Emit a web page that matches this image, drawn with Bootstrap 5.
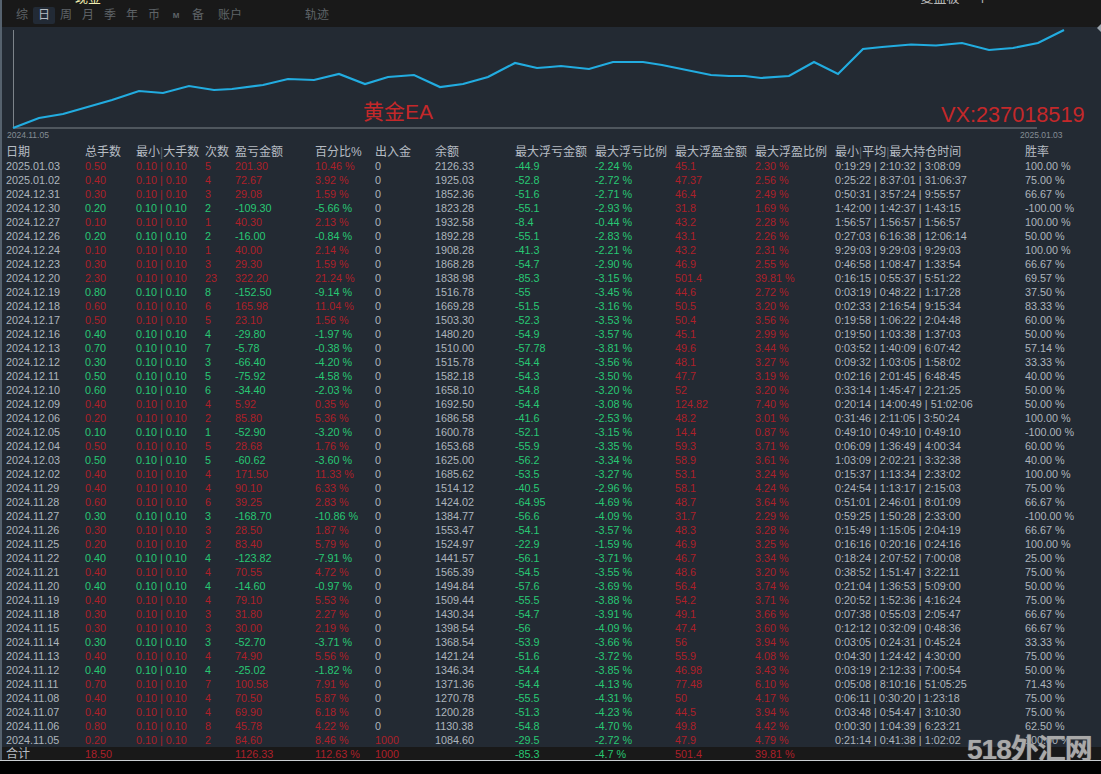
<!DOCTYPE html>
<html lang="zh">
<head>
<meta charset="utf-8">
<title>黄金EA</title>
<link href="https://cdn.jsdelivr.net/npm/bootstrap@5.3.0/dist/css/bootstrap.min.css" rel="stylesheet">
<style>
html,body{height:100%;overflow:hidden;background:#000}
body{font-family:"Liberation Sans","Noto Sans CJK SC",sans-serif}
.shell{height:760px;border-left:2px solid #56626e;display:flex;flex-direction:column;background:#232a33;position:relative;overflow:hidden}
.base-line{height:1px;background:#c9cdd1}
.topbar{height:27px;background:#191919;flex:none;overflow:hidden;position:relative}
.cut-row{height:4px;overflow:hidden;font-size:13px;line-height:4px;padding-left:73px;padding-right:112px}
.cut-row span{display:block;margin-top:-8px;line-height:12px}
.cut-y{color:#f2eeb0}
.cut-w{color:#b9b9b9}
.tabs{padding-left:9px;height:23px;font-size:12px;color:#5f6468}
.tab{width:22px;height:17px;line-height:17px;text-align:center;border-radius:2px}
.tab-on{background:#222a35;color:#b5bcc3}
.tab-m{font-size:8px;font-weight:700}
.tab-a{width:auto;margin-left:9px}
.tab-b{width:auto;margin-left:63px}
.chart-wrap{height:118px;flex:none}
.chart-wrap svg{display:block}
.axis-t{font-size:8.5px;fill:#858d95}
.mark-a{font-size:21px;fill:#c4282a}
.mark-b{font-size:21.7px;fill:#c4282a}
.table.sheet{--bs-table-bg:transparent;--bs-table-color:#adb5bd;table-layout:fixed;width:1099px;margin:0;font-size:10.8px;color:#adb5bd}
.table.sheet>:not(caption)>*>*{padding:0;height:14px;line-height:14px;white-space:nowrap;overflow:visible;background:transparent;color:inherit;border:0;box-shadow:none}
.table.sheet th{font-weight:400;font-size:12px;color:#b6bcc3}
.table.sheet>:not(caption)>*>*:first-child{padding-left:4px}
.sheet th i{font-style:normal;color:#59626c}
tr.lossy{color:#28c873}
tr.gain{color:#ad2029}
.table.sheet>tbody>tr>td:nth-child(1),.table.sheet>tbody>tr>td:nth-child(7),.table.sheet>tbody>tr>td:nth-child(8),.table.sheet>tbody>tr>td:nth-child(13),.table.sheet>tbody>tr>td:nth-child(14){color:#adb5bd}
.table.sheet>tbody>tr>td:nth-child(9),.table.sheet>tbody>tr>td:nth-child(10){color:#28c873}
.table.sheet>tbody>tr>td:nth-child(11),.table.sheet>tbody>tr>td:nth-child(12){color:#ad2029}
.table.sheet>tfoot>tr>td{background:#191919;color:#ad2029}
.table.sheet>tfoot>tr>td:first-child{color:#b6bcc3;font-size:12px}
.table.sheet>tfoot>tr>td:nth-child(9),.table.sheet>tfoot>tr>td:nth-child(10){color:#28c873}
.table.sheet>tbody>tr>td.in-red{color:#ad2029}
.stamp{position:absolute;left:965px;top:735px;font-size:28px;font-weight:700;line-height:30px;color:#a9a9a9;letter-spacing:-1px;white-space:nowrap;text-shadow:0 0 1px #777}
.edge-tip{position:absolute;right:0;top:24px;width:0;height:0;border:4px solid transparent;border-right-color:#9aa3ab;border-left:0}
</style>
</head>
<body>
<div class="shell">
<div class="topbar">
<div class="cut-row d-flex justify-content-between"><span class="cut-y">现金</span><span class="cut-w">复盘板 一个</span></div>
<div class="tabs d-flex align-items-center">
<div class="tab">综</div><div class="tab tab-on">日</div><div class="tab">周</div><div class="tab">月</div><div class="tab">季</div><div class="tab">年</div><div class="tab">币</div><div class="tab tab-m">M</div><div class="tab">备</div><div class="tab tab-a">账户</div><div class="tab tab-b">轨迹</div>
</div>
</div>
<div class="edge-tip"></div>
<div class="chart-wrap">
<svg width="1099" height="118" viewBox="2 27 1099 118">
<path d="M13.5 30V128H1037" fill="none" stroke="#7c838a" stroke-width="1"/>
<polyline fill="none" stroke="#22ace0" stroke-width="2.2" points="13,128 39,118 63,114 112,100 139,91 163,93 189,86 214,90 232,89 263,85 288,79 314,80 339,74 365,84 388,77 414,75 440,87 463,84 488,77 515,63 537,68 550,67 561,66 589,69 613,62 643,62 662,65 711,75 729,76 745,76 761,78 789,76 814,62 838,74 863,49 882,47 911,44.5 936,45.5 962,43 989,50 1013,48 1038,43 1064,30"/>
<text class="axis-t" x="7" y="138">2024.11.05</text>
<text class="axis-t" x="1020" y="138">2025.01.03</text>
<text class="mark-a" x="363" y="119">黄金EA</text>
<text class="mark-b" x="941" y="122">VX:237018519</text>
</svg>
</div>
<table class="table table-borderless sheet">
<colgroup><col style="width:83px"><col style="width:51px"><col style="width:69px"><col style="width:30px"><col style="width:80px"><col style="width:60px"><col style="width:60px"><col style="width:80px"><col style="width:80px"><col style="width:80px"><col style="width:80px"><col style="width:80px"><col style="width:190px"><col style="width:76px"></colgroup>
<thead><tr><th>日期</th><th>总手数</th><th>最小<i>|</i>大手数</th><th>次数</th><th>盈亏金额</th><th>百分比%</th><th>出入金</th><th>余额</th><th>最大浮亏金额</th><th>最大浮亏比例</th><th>最大浮盈金额</th><th>最大浮盈比例</th><th>最小<i>|</i>平均<i>|</i>最大持仓时间</th><th>胜率</th></tr></thead>
<tbody>
<tr class="gain"><td>2025.01.03</td><td>0.50</td><td>0.10 | 0.10</td><td>5</td><td>201.30</td><td>10.46 %</td><td>0</td><td>2126.33</td><td>-44.9</td><td>-2.24 %</td><td>45.1</td><td>2.30 %</td><td>0:19:29 | 2:10:32 | 3:08:09</td><td>100.00 %</td></tr>
<tr class="gain"><td>2025.01.02</td><td>0.40</td><td>0.10 | 0.10</td><td>4</td><td>72.67</td><td>3.92 %</td><td>0</td><td>1925.03</td><td>-52.8</td><td>-2.72 %</td><td>47.37</td><td>2.56 %</td><td>0:25:22 | 8:37:01 | 31:06:37</td><td>75.00 %</td></tr>
<tr class="gain"><td>2024.12.31</td><td>0.30</td><td>0.10 | 0.10</td><td>3</td><td>29.08</td><td>1.59 %</td><td>0</td><td>1852.36</td><td>-51.6</td><td>-2.71 %</td><td>46.4</td><td>2.49 %</td><td>0:50:31 | 3:57:24 | 9:55:57</td><td>66.67 %</td></tr>
<tr class="lossy"><td>2024.12.30</td><td>0.20</td><td>0.10 | 0.10</td><td>2</td><td>-109.30</td><td>-5.66 %</td><td>0</td><td>1823.28</td><td>-55.1</td><td>-2.93 %</td><td>31.8</td><td>1.69 %</td><td>1:42:00 | 1:42:37 | 1:43:15</td><td>-100.00 %</td></tr>
<tr class="gain"><td>2024.12.27</td><td>0.10</td><td>0.10 | 0.10</td><td>1</td><td>40.30</td><td>2.13 %</td><td>0</td><td>1932.58</td><td>-8.4</td><td>-0.44 %</td><td>43.2</td><td>2.28 %</td><td>1:56:57 | 1:56:57 | 1:56:57</td><td>100.00 %</td></tr>
<tr class="lossy"><td>2024.12.26</td><td>0.20</td><td>0.10 | 0.10</td><td>2</td><td>-16.00</td><td>-0.84 %</td><td>0</td><td>1892.28</td><td>-55.1</td><td>-2.83 %</td><td>43.1</td><td>2.26 %</td><td>0:27:03 | 6:16:38 | 12:06:14</td><td>50.00 %</td></tr>
<tr class="gain"><td>2024.12.24</td><td>0.10</td><td>0.10 | 0.10</td><td>1</td><td>40.00</td><td>2.14 %</td><td>0</td><td>1908.28</td><td>-41.3</td><td>-2.21 %</td><td>43.2</td><td>2.31 %</td><td>9:29:03 | 9:29:03 | 9:29:03</td><td>100.00 %</td></tr>
<tr class="gain"><td>2024.12.23</td><td>0.30</td><td>0.10 | 0.10</td><td>3</td><td>29.30</td><td>1.59 %</td><td>0</td><td>1868.28</td><td>-54.7</td><td>-2.90 %</td><td>46.9</td><td>2.55 %</td><td>0:46:58 | 1:08:47 | 1:33:54</td><td>66.67 %</td></tr>
<tr class="gain"><td>2024.12.20</td><td>2.30</td><td>0.10 | 0.10</td><td>23</td><td>322.20</td><td>21.24 %</td><td>0</td><td>1838.98</td><td>-85.3</td><td>-3.15 %</td><td>501.4</td><td>39.81 %</td><td>0:16:15 | 0:55:37 | 5:51:22</td><td>69.57 %</td></tr>
<tr class="lossy"><td>2024.12.19</td><td>0.80</td><td>0.10 | 0.10</td><td>8</td><td>-152.50</td><td>-9.14 %</td><td>0</td><td>1516.78</td><td>-55</td><td>-3.45 %</td><td>44.6</td><td>2.72 %</td><td>0:03:19 | 0:48:22 | 1:17:28</td><td>37.50 %</td></tr>
<tr class="gain"><td>2024.12.18</td><td>0.60</td><td>0.10 | 0.10</td><td>6</td><td>165.98</td><td>11.04 %</td><td>0</td><td>1669.28</td><td>-51.5</td><td>-3.16 %</td><td>50.5</td><td>3.20 %</td><td>0:02:33 | 2:16:54 | 9:15:34</td><td>83.33 %</td></tr>
<tr class="gain"><td>2024.12.17</td><td>0.50</td><td>0.10 | 0.10</td><td>5</td><td>23.10</td><td>1.56 %</td><td>0</td><td>1503.30</td><td>-52.3</td><td>-3.53 %</td><td>50.4</td><td>3.56 %</td><td>0:19:58 | 1:06:22 | 2:04:48</td><td>60.00 %</td></tr>
<tr class="lossy"><td>2024.12.16</td><td>0.40</td><td>0.10 | 0.10</td><td>4</td><td>-29.80</td><td>-1.97 %</td><td>0</td><td>1480.20</td><td>-54.9</td><td>-3.57 %</td><td>45.1</td><td>2.99 %</td><td>0:19:50 | 1:03:38 | 1:37:03</td><td>50.00 %</td></tr>
<tr class="lossy"><td>2024.12.13</td><td>0.70</td><td>0.10 | 0.10</td><td>7</td><td>-5.78</td><td>-0.38 %</td><td>0</td><td>1510.00</td><td>-57.78</td><td>-3.81 %</td><td>49.6</td><td>3.44 %</td><td>0:03:52 | 1:40:09 | 6:07:42</td><td>57.14 %</td></tr>
<tr class="lossy"><td>2024.12.12</td><td>0.30</td><td>0.10 | 0.10</td><td>3</td><td>-66.40</td><td>-4.20 %</td><td>0</td><td>1515.78</td><td>-54.4</td><td>-3.56 %</td><td>48.1</td><td>3.27 %</td><td>0:09:32 | 1:03:05 | 1:58:02</td><td>33.33 %</td></tr>
<tr class="lossy"><td>2024.12.11</td><td>0.50</td><td>0.10 | 0.10</td><td>5</td><td>-75.92</td><td>-4.58 %</td><td>0</td><td>1582.18</td><td>-54.3</td><td>-3.50 %</td><td>47.7</td><td>3.19 %</td><td>0:02:16 | 2:01:45 | 6:48:45</td><td>40.00 %</td></tr>
<tr class="lossy"><td>2024.12.10</td><td>0.60</td><td>0.10 | 0.10</td><td>6</td><td>-34.40</td><td>-2.03 %</td><td>0</td><td>1658.10</td><td>-54.8</td><td>-3.20 %</td><td>52</td><td>3.20 %</td><td>0:33:14 | 1:45:47 | 2:21:25</td><td>50.00 %</td></tr>
<tr class="gain"><td>2024.12.09</td><td>0.40</td><td>0.10 | 0.10</td><td>4</td><td>5.92</td><td>0.35 %</td><td>0</td><td>1692.50</td><td>-54.4</td><td>-3.08 %</td><td>124.82</td><td>7.40 %</td><td>0:20:14 | 14:00:49 | 51:02:06</td><td>50.00 %</td></tr>
<tr class="gain"><td>2024.12.06</td><td>0.20</td><td>0.10 | 0.10</td><td>2</td><td>85.80</td><td>5.36 %</td><td>0</td><td>1686.58</td><td>-41.6</td><td>-2.53 %</td><td>48.2</td><td>3.01 %</td><td>0:31:46 | 2:11:05 | 3:50:24</td><td>100.00 %</td></tr>
<tr class="lossy"><td>2024.12.05</td><td>0.10</td><td>0.10 | 0.10</td><td>1</td><td>-52.90</td><td>-3.20 %</td><td>0</td><td>1600.78</td><td>-52.1</td><td>-3.15 %</td><td>14.4</td><td>0.87 %</td><td>0:49:10 | 0:49:10 | 0:49:10</td><td>-100.00 %</td></tr>
<tr class="gain"><td>2024.12.04</td><td>0.50</td><td>0.10 | 0.10</td><td>5</td><td>28.68</td><td>1.76 %</td><td>0</td><td>1653.68</td><td>-55.9</td><td>-3.35 %</td><td>59.3</td><td>3.71 %</td><td>0:06:09 | 1:36:49 | 4:00:34</td><td>60.00 %</td></tr>
<tr class="lossy"><td>2024.12.03</td><td>0.50</td><td>0.10 | 0.10</td><td>5</td><td>-60.62</td><td>-3.60 %</td><td>0</td><td>1625.00</td><td>-56.2</td><td>-3.34 %</td><td>58.9</td><td>3.61 %</td><td>1:03:09 | 2:02:21 | 3:32:38</td><td>40.00 %</td></tr>
<tr class="gain"><td>2024.12.02</td><td>0.40</td><td>0.10 | 0.10</td><td>4</td><td>171.50</td><td>11.33 %</td><td>0</td><td>1685.62</td><td>-53.5</td><td>-3.27 %</td><td>53.1</td><td>3.24 %</td><td>0:15:37 | 1:13:34 | 2:33:02</td><td>100.00 %</td></tr>
<tr class="gain"><td>2024.11.29</td><td>0.40</td><td>0.10 | 0.10</td><td>4</td><td>90.10</td><td>6.33 %</td><td>0</td><td>1514.12</td><td>-40.5</td><td>-2.96 %</td><td>58.1</td><td>4.24 %</td><td>0:24:54 | 1:13:17 | 2:15:03</td><td>75.00 %</td></tr>
<tr class="gain"><td>2024.11.28</td><td>0.60</td><td>0.10 | 0.10</td><td>6</td><td>39.25</td><td>2.83 %</td><td>0</td><td>1424.02</td><td>-64.95</td><td>-4.69 %</td><td>48.7</td><td>3.64 %</td><td>0:51:01 | 2:46:01 | 8:01:09</td><td>66.67 %</td></tr>
<tr class="lossy"><td>2024.11.27</td><td>0.30</td><td>0.10 | 0.10</td><td>3</td><td>-168.70</td><td>-10.86 %</td><td>0</td><td>1384.77</td><td>-56.6</td><td>-4.09 %</td><td>31.7</td><td>2.29 %</td><td>0:59:25 | 1:50:28 | 2:33:00</td><td>-100.00 %</td></tr>
<tr class="gain"><td>2024.11.26</td><td>0.30</td><td>0.10 | 0.10</td><td>3</td><td>28.50</td><td>1.87 %</td><td>0</td><td>1553.47</td><td>-54.1</td><td>-3.57 %</td><td>48.3</td><td>3.28 %</td><td>0:15:49 | 1:15:05 | 2:04:19</td><td>66.67 %</td></tr>
<tr class="gain"><td>2024.11.25</td><td>0.20</td><td>0.10 | 0.10</td><td>2</td><td>83.40</td><td>5.79 %</td><td>0</td><td>1524.97</td><td>-22.9</td><td>-1.59 %</td><td>46.9</td><td>3.25 %</td><td>0:16:16 | 0:20:16 | 0:24:16</td><td>100.00 %</td></tr>
<tr class="lossy"><td>2024.11.22</td><td>0.40</td><td>0.10 | 0.10</td><td>4</td><td>-123.82</td><td>-7.91 %</td><td>0</td><td>1441.57</td><td>-56.1</td><td>-3.71 %</td><td>46.7</td><td>3.34 %</td><td>0:18:24 | 2:07:52 | 7:00:08</td><td>25.00 %</td></tr>
<tr class="gain"><td>2024.11.21</td><td>0.40</td><td>0.10 | 0.10</td><td>4</td><td>70.55</td><td>4.72 %</td><td>0</td><td>1565.39</td><td>-54.5</td><td>-3.55 %</td><td>48.6</td><td>3.20 %</td><td>0:38:52 | 1:51:47 | 3:22:11</td><td>75.00 %</td></tr>
<tr class="lossy"><td>2024.11.20</td><td>0.40</td><td>0.10 | 0.10</td><td>4</td><td>-14.60</td><td>-0.97 %</td><td>0</td><td>1494.84</td><td>-57.6</td><td>-3.69 %</td><td>56.4</td><td>3.74 %</td><td>0:21:04 | 1:36:53 | 5:09:00</td><td>50.00 %</td></tr>
<tr class="gain"><td>2024.11.19</td><td>0.40</td><td>0.10 | 0.10</td><td>4</td><td>79.10</td><td>5.53 %</td><td>0</td><td>1509.44</td><td>-55.5</td><td>-3.88 %</td><td>54.2</td><td>3.71 %</td><td>0:20:52 | 1:52:36 | 4:16:24</td><td>75.00 %</td></tr>
<tr class="gain"><td>2024.11.18</td><td>0.30</td><td>0.10 | 0.10</td><td>3</td><td>31.80</td><td>2.27 %</td><td>0</td><td>1430.34</td><td>-54.7</td><td>-3.91 %</td><td>49.1</td><td>3.66 %</td><td>0:07:38 | 0:55:03 | 2:05:47</td><td>66.67 %</td></tr>
<tr class="gain"><td>2024.11.15</td><td>0.30</td><td>0.10 | 0.10</td><td>3</td><td>30.00</td><td>2.19 %</td><td>0</td><td>1398.54</td><td>-56</td><td>-4.09 %</td><td>47.4</td><td>3.60 %</td><td>0:12:12 | 0:32:09 | 0:48:36</td><td>66.67 %</td></tr>
<tr class="lossy"><td>2024.11.14</td><td>0.30</td><td>0.10 | 0.10</td><td>3</td><td>-52.70</td><td>-3.71 %</td><td>0</td><td>1368.54</td><td>-53.9</td><td>-3.66 %</td><td>56</td><td>3.94 %</td><td>0:03:05 | 0:24:31 | 0:45:24</td><td>33.33 %</td></tr>
<tr class="gain"><td>2024.11.13</td><td>0.40</td><td>0.10 | 0.10</td><td>4</td><td>74.90</td><td>5.56 %</td><td>0</td><td>1421.24</td><td>-51.6</td><td>-3.72 %</td><td>55.9</td><td>4.08 %</td><td>0:04:30 | 1:24:42 | 4:30:00</td><td>75.00 %</td></tr>
<tr class="lossy"><td>2024.11.12</td><td>0.40</td><td>0.10 | 0.10</td><td>4</td><td>-25.02</td><td>-1.82 %</td><td>0</td><td>1346.34</td><td>-54.4</td><td>-3.85 %</td><td>46.98</td><td>3.43 %</td><td>0:03:19 | 2:12:33 | 7:00:54</td><td>50.00 %</td></tr>
<tr class="gain"><td>2024.11.11</td><td>0.70</td><td>0.10 | 0.10</td><td>7</td><td>100.58</td><td>7.91 %</td><td>0</td><td>1371.36</td><td>-54.4</td><td>-4.13 %</td><td>77.48</td><td>6.10 %</td><td>0:05:08 | 8:10:16 | 51:05:25</td><td>71.43 %</td></tr>
<tr class="gain"><td>2024.11.08</td><td>0.40</td><td>0.10 | 0.10</td><td>4</td><td>70.50</td><td>5.87 %</td><td>0</td><td>1270.78</td><td>-55.5</td><td>-4.31 %</td><td>50</td><td>4.17 %</td><td>0:06:11 | 0:30:20 | 1:23:18</td><td>75.00 %</td></tr>
<tr class="gain"><td>2024.11.07</td><td>0.40</td><td>0.10 | 0.10</td><td>4</td><td>69.90</td><td>6.18 %</td><td>0</td><td>1200.28</td><td>-51.3</td><td>-4.23 %</td><td>44.5</td><td>3.94 %</td><td>0:03:48 | 0:54:47 | 3:10:30</td><td>75.00 %</td></tr>
<tr class="gain"><td>2024.11.06</td><td>0.80</td><td>0.10 | 0.10</td><td>8</td><td>45.78</td><td>4.22 %</td><td>0</td><td>1130.38</td><td>-54.8</td><td>-4.70 %</td><td>49.8</td><td>4.42 %</td><td>0:00:30 | 1:04:39 | 6:23:21</td><td>62.50 %</td></tr>
<tr class="gain"><td>2024.11.05</td><td>0.20</td><td>0.10 | 0.10</td><td>2</td><td>84.60</td><td>8.46 %</td><td class="in-red">1000</td><td>1084.60</td><td>-29.5</td><td>-2.72 %</td><td>47.9</td><td>4.79 %</td><td>0:21:14 | 0:41:38 | 1:02:02</td><td>100.00 %</td></tr>
</tbody>
<tfoot><tr><td>合计</td><td>18.50</td><td></td><td></td><td>1126.33</td><td>112.63 %</td><td>1000</td><td></td><td>-85.3</td><td>-4.7 %</td><td>501.4</td><td>39.81 %</td><td></td><td></td></tr></tfoot>
</table>
<div class="stamp">518外汇网</div>
</div>
<div class="base-line"></div>
<script src="https://cdn.jsdelivr.net/npm/bootstrap@5.3.0/dist/js/bootstrap.bundle.min.js"></script>
</body>
</html>
